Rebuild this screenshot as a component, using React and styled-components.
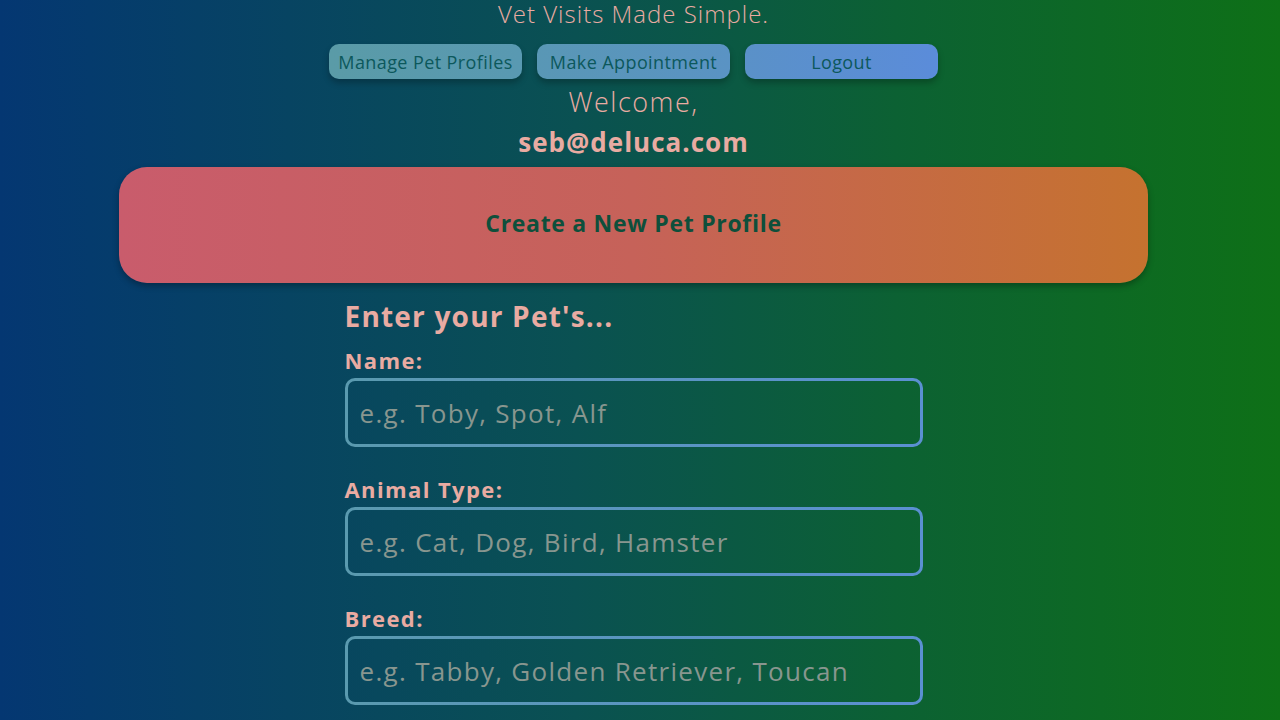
import React from 'react';
import styled, { createGlobalStyle } from 'styled-components';

const bodyGradient = 'linear-gradient(90deg, #043772 0%, #0a5152 45%, #0c6133 70%, #0e7017 100%)';

const GlobalStyle = createGlobalStyle`
  html, body {
    margin: 0;
    padding: 0;
    height: 100%;
  }
  body {
    font-family: "Open Sans", Lato, sans-serif;
    background: ${bodyGradient};
    min-height: 720px;
    overflow: hidden;
  }
`;

const Page = styled.div`
  width: 1267px;
  display: flex;
  flex-direction: column;
  align-items: center;
  padding-top: 2px;
`;

const Tagline = styled.div`
  font-size: 24px;
  font-weight: 300;
  letter-spacing: 1px;
  color: #e9aba2;
  line-height: 24px;
`;

const NavRow = styled.nav`
  display: flex;
  gap: 15px;
  margin-top: 18px;
`;

const NavButton = styled.button`
  width: 193px;
  height: 35px;
  padding: 0;
  border: none;
  border-radius: 10px;
  background: ${(p) => p.$bg};
  color: #0c585c;
  font-family: "Open Sans", Lato, sans-serif;
  font-size: 18px;
  font-weight: 400;
  letter-spacing: 0.4px;
  box-shadow: 0 4px 6px rgba(0, 0, 0, 0.25);
  cursor: pointer;
`;

const Welcome = styled.div`
  font-size: 27px;
  font-weight: 300;
  letter-spacing: 1.5px;
  color: #e9aba2;
  line-height: 34px;
  margin-top: 6px;
`;

const Email = styled.div`
  font-size: 26px;
  font-weight: 700;
  letter-spacing: 1px;
  color: #e9aba2;
  line-height: 34px;
  margin-top: 6px;
`;

const Banner = styled.div`
  box-sizing: border-box;
  width: 1029px;
  height: 116px;
  margin-top: 8px;
  padding-bottom: 4px;
  border-radius: 28px;
  background: linear-gradient(90deg, #c95c6c 0%, #c66259 50%, #c5722f 100%);
  box-shadow: 0 3px 6px rgba(0, 0, 0, 0.3);
  display: flex;
  align-items: center;
  justify-content: center;
  font-size: 23px;
  font-weight: 700;
  letter-spacing: 0.7px;
  color: #0e4f3b;
`;

const Form = styled.form`
  width: 578px;
  display: flex;
  flex-direction: column;
  margin-top: 15px;
`;

const FormTitle = styled.h2`
  margin: 0 0 12px;
  font-size: 28px;
  font-weight: 700;
  letter-spacing: 1.2px;
  line-height: 36px;
  color: #e9aba2;
`;

const Field = styled.label`
  display: flex;
  flex-direction: column;
  gap: 4px;
  margin-bottom: 28px;
`;

const FieldLabel = styled.span`
  font-size: 22px;
  font-weight: 700;
  letter-spacing: 1.4px;
  line-height: 28px;
  color: #e9aba2;
`;

const Input = styled.input`
  box-sizing: border-box;
  width: 578px;
  height: 69px;
  border: 3px solid transparent;
  border-radius: 10px;
  background:
    ${bodyGradient} padding-box fixed,
    linear-gradient(90deg, #5a9aaf, #5b90d2) border-box;
  padding: 0 12px;
  font-family: "Open Sans", Lato, sans-serif;
  font-size: 26px;
  letter-spacing: 1.3px;
  color: #e9aba2;
  outline: none;

  &::placeholder {
    color: #88968f;
  }
`;

const fields = [
  { label: 'Name:', placeholder: 'e.g. Toby, Spot, Alf' },
  { label: 'Animal Type:', placeholder: 'e.g. Cat, Dog, Bird, Hamster' },
  { label: 'Breed:', placeholder: 'e.g. Tabby, Golden Retriever, Toucan' },
];

export default function App() {
  return (
    <>
      <GlobalStyle />
      <Page>
        <Tagline>Vet Visits Made Simple.</Tagline>
        <NavRow>
          <NavButton $bg="linear-gradient(90deg, #5a9ba7, #5999b2)">Manage Pet Profiles</NavButton>
          <NavButton $bg="linear-gradient(90deg, #5997b5, #5a93c4)">Make Appointment</NavButton>
          <NavButton $bg="linear-gradient(90deg, #5a91c8, #5b8cda)">Logout</NavButton>
        </NavRow>
        <Welcome>Welcome,</Welcome>
        <Email>seb@deluca.com</Email>
        <Banner>Create a New Pet Profile</Banner>
        <Form onSubmit={(e) => e.preventDefault()}>
          <FormTitle>Enter your Pet's...</FormTitle>
          {fields.map((f) => (
            <Field key={f.label}>
              <FieldLabel>{f.label}</FieldLabel>
              <Input placeholder={f.placeholder} />
            </Field>
          ))}
        </Form>
      </Page>
    </>
  );
}
